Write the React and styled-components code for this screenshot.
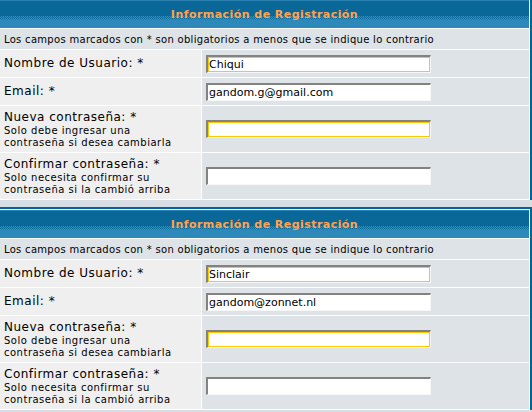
import React from "react";
import styled, { createGlobalStyle } from "styled-components";

const forms = [
  { user: "Chiqui", email: "gandom.g@gmail.com" },
  { user: "Sinclair", email: "gandom@zonnet.nl" },
];

const GlobalStyle = createGlobalStyle`
  html, body {
    margin: 0;
    padding: 0;
    background: #d7dde4;
  }
  body {
    font-family: "DejaVu Sans", Verdana, sans-serif;
    color: #000;
    overflow: hidden;
  }
`;

const Page = styled.div`
  width: 532px;
  height: 412px;
  overflow: hidden;
  display: flex;
  flex-direction: column;
  gap: 7px;
`;

// phpBB style "forumline" table: 2px blue frame, white 1px cell spacing
const Forumline = styled.div`
  box-sizing: border-box;
  flex-shrink: 0;
  width: 535px;
  margin-left: -3px;
  margin-top: ${(p) => (p.$first ? "-3px" : "0")};
  display: grid;
  grid-template-columns: 201px 327px;
  gap: 1px;
  padding: 1px;
  background: #fff;
  border: 2px solid #006699;
  border-bottom: 0;
`;

const HeadCell = styled.div`
  grid-column: 1 / -1;
  height: 28px;
  display: flex;
  align-items: center;
  justify-content: center;
  color: #ffa34f;
  font-size: 11px;
  font-weight: bold;
  letter-spacing: 0.45px;
  background:
    repeating-linear-gradient(90deg, #0a6898 0 1px, #3390c0 1px 2px) 0 16px / 100% 1px no-repeat,
    repeating-linear-gradient(90deg, #3390c0 0 1px, #0a6898 1px 2px) 0 17px / 100% 1px no-repeat,
    repeating-linear-gradient(90deg, #0a6898 0 1px, #3390c0 1px 2px) 0 18px / 100% 1px no-repeat,
    repeating-linear-gradient(90deg, #3390c0 0 1px, #1f7cad 1px 2px) 0 19px / 100% 1px no-repeat,
    linear-gradient(#2b81b1 0 1px, #0a6898 1px 16px, #1f7cad 16px 20px, #2c89ba 20px 100%);
`;

const InfoCell = styled.div`
  grid-column: 1 / -1;
  height: 20px;
  display: flex;
  align-items: center;
  padding: 0 4px;
  background: #dee3e7;
  font-size: 10px;
  letter-spacing: 0.3px;
`;

const LabelCell = styled.div`
  box-sizing: border-box;
  height: ${(p) => (p.$tall ? "46px" : "27px")};
  display: flex;
  flex-direction: column;
  justify-content: center;
  padding: 0 4px;
  background: #efefef;
`;

const FieldCell = styled.div`
  box-sizing: border-box;
  height: ${(p) => (p.$tall ? "46px" : "27px")};
  display: flex;
  align-items: center;
  padding: 0 4px;
  background: #dee3e7;
`;

const Label = styled.span`
  font-size: 12px;
  line-height: 15px;
  letter-spacing: 0.5px;
`;

const Hint = styled.span`
  font-size: 10px;
  line-height: 12px;
  letter-spacing: 0.5px;
`;

const Field = styled.input`
  box-sizing: border-box;
  width: 225px;
  height: 18px;
  margin: 0;
  padding: 0 1px;
  font-family: "DejaVu Sans", Verdana, sans-serif;
  font-size: 11px;
  color: #000;
  background: #fff;
  border-style: solid;
  border-width: 2px 1px 1px 2px;
  border-color: #85817c #f7f7f7 #f7f7f7 #85817c;
  box-shadow: ${(p) => (p.$active ? "inset 0 0 0 1px #fcc800" : "none")};
  outline: none;
`;

const RegistrationForm = ({ first, user, email }) => (
  <Forumline $first={first}>
    <HeadCell>Información de Registración</HeadCell>
    <InfoCell>
      Los campos marcados con * son obligatorios a menos que se indique lo contrario
    </InfoCell>

    <LabelCell>
      <Label>Nombre de Usuario: *</Label>
    </LabelCell>
    <FieldCell>
      <Field type="text" value={user} readOnly $active />
    </FieldCell>

    <LabelCell>
      <Label>Email: *</Label>
    </LabelCell>
    <FieldCell>
      <Field type="text" value={email} readOnly />
    </FieldCell>

    <LabelCell $tall>
      <Label>Nueva contraseña: *</Label>
      <Hint>
        Solo debe ingresar una
        <br />
        contraseña si desea cambiarla
      </Hint>
    </LabelCell>
    <FieldCell $tall>
      <Field type="password" value="" readOnly $active />
    </FieldCell>

    <LabelCell $tall>
      <Label>Confirmar contraseña: *</Label>
      <Hint>
        Solo necesita confirmar su
        <br />
        contraseña si la cambió arriba
      </Hint>
    </LabelCell>
    <FieldCell $tall>
      <Field type="password" value="" readOnly />
    </FieldCell>
  </Forumline>
);

export default function App() {
  return (
    <>
      <GlobalStyle />
      <Page>
        {forms.map((f, i) => (
          <RegistrationForm key={f.user} first={i === 0} user={f.user} email={f.email} />
        ))}
      </Page>
    </>
  );
}
